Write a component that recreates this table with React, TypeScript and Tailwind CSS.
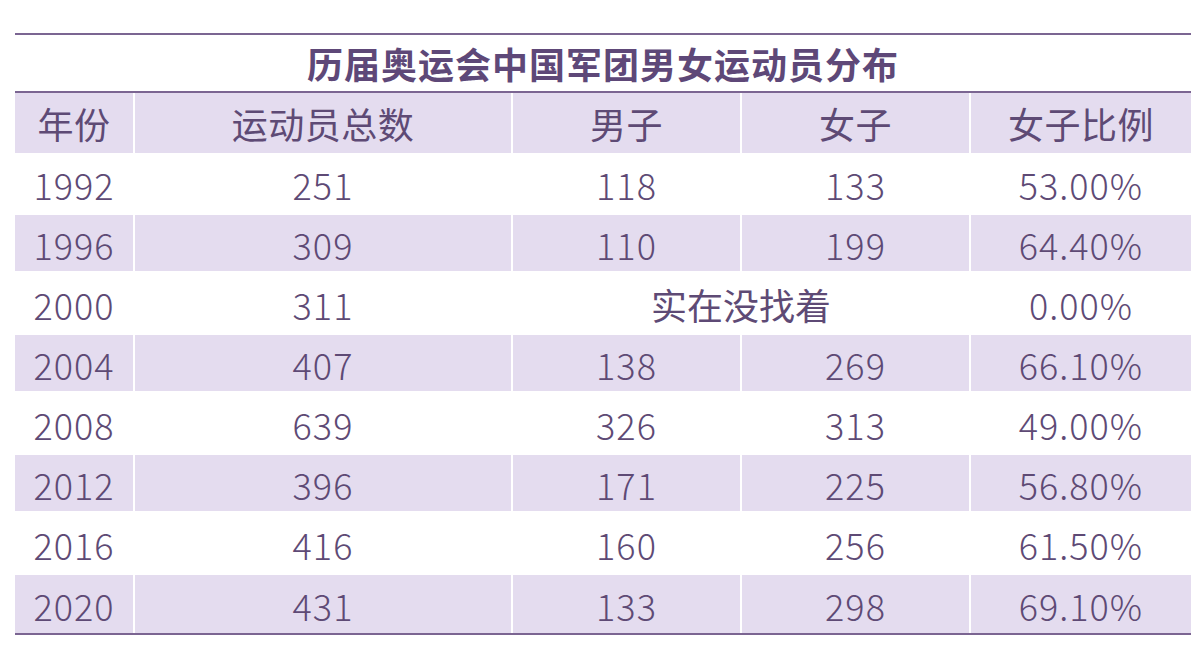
const rows = [
  ["1992", "251", "118", "133", "53.00%"],
  ["1996", "309", "110", "199", "64.40%"],
  ["2000", "311", null, null, "0.00%"],
  ["2004", "407", "138", "269", "66.10%"],
  ["2008", "639", "326", "313", "49.00%"],
  ["2012", "396", "171", "225", "56.80%"],
  ["2016", "416", "160", "256", "61.50%"],
  ["2020", "431", "133", "298", "69.10%"],
];

const cols = "grid grid-cols-[118px_376px_227px_227px_220px] gap-x-[2px]";
const font = { fontFamily: '"Noto Sans CJK SC", "Noto Sans", sans-serif' };

export default function App() {
  return (
    <div className="bg-white w-[1204px] h-[650px] pt-[33px] pl-[15px]" style={font}>
      <div className="w-[1176px] border-t-2 border-b-2 border-[#7b6592] text-[#5e4a75]">
        <div className="h-[58px] flex items-center justify-center border-b-2 border-[#7b6592] text-[36px] font-bold tracking-[1px] text-[#5e4878]">
          历届奥运会中国军团男女运动员分布
        </div>
        <div className={`${cols} h-[60px] text-[36px] font-normal tracking-[0.5px]`}>
          {["年份", "运动员总数", "男子", "女子", "女子比例"].map((h) => (
            <div key={h} className="bg-[#e4dcef] flex items-center justify-center">
              {h}
            </div>
          ))}
        </div>
        {rows.map((r, i) => {
          const shaded = i % 2 === 1;
          const cell = `flex items-center justify-center pt-[2px] ${shaded ? "bg-[#e4dcef]" : ""}`;
          return (
            <div
              key={r[0]}
              className={`${cols} h-[60px] text-[36px] font-light tracking-[1px] ${shaded ? (i === 7 ? "pt-[2px] h-[58px]" : "py-[2px]") : ""}`}
            >
              <div className={cell}>{r[0]}</div>
              <div className={cell}>{r[1]}</div>
              {r[2] === null ? (
                <div className={`${cell} col-span-2 font-normal tracking-[0px]`}>实在没找着</div>
              ) : (
                <>
                  <div className={cell}>{r[2]}</div>
                  <div className={cell}>{r[3]}</div>
                </>
              )}
              <div className={cell}>{r[4]}</div>
            </div>
          );
        })}
      </div>
    </div>
  );
}
